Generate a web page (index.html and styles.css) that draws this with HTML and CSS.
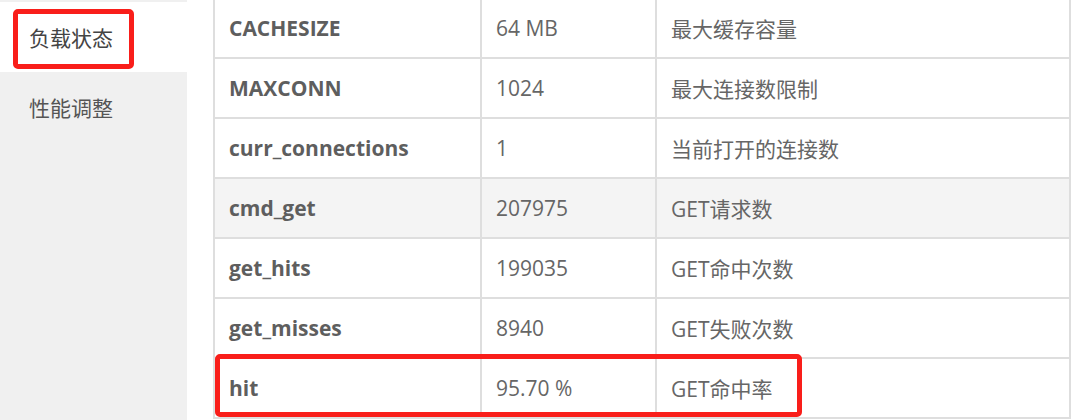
FILE: index.html
```html
<!DOCTYPE html>
<html lang="zh-CN">
<head>
<meta charset="utf-8">
<title>负载状态</title>
<link rel="stylesheet" href="styles.css">
</head>
<body>
<div class="page">
  <aside class="sidebar">
    <div class="nav-item active"><span class="mark"></span>负载状态</div>
    <div class="nav-item">性能调整</div>
  </aside>
  <main class="main">
    <table class="stats">
      <colgroup><col class="c1"><col class="c2"><col class="c3"></colgroup>
      <tbody>
        <tr><td class="key">CACHESIZE</td><td>64 MB</td><td>最大缓存容量</td></tr>
        <tr><td class="key">MAXCONN</td><td>1024</td><td>最大连接数限制</td></tr>
        <tr><td class="key">curr_connections</td><td>1</td><td>当前打开的连接数</td></tr>
        <tr class="hover"><td class="key">cmd_get</td><td>207975</td><td>GET请求数</td></tr>
        <tr><td class="key">get_hits</td><td>199035</td><td>GET命中次数</td></tr>
        <tr><td class="key">get_misses</td><td>8940</td><td>GET失败次数</td></tr>
        <tr><td class="key">hit</td><td>95.70 %</td><td>GET命中率</td></tr>
      </tbody>
    </table>
    <div class="mark mark-row"></div>
  </main>
</div>
</body>
</html>
```

FILE: styles.css
```css
html, body {
  margin: 0;
  padding: 0;
  background: #fff;
  height: 100%;
  overflow: hidden;
}
body {
  font-family: "Open Sans", "Noto Sans CJK SC", sans-serif;
  color: #5c5c5c;
}
.page {
  display: flex;
  height: 420px;
}
.sidebar {
  width: 187px;
  flex: none;
  background: #f0f0f0;
  padding-top: 2px;
  box-sizing: border-box;
}
.nav-item {
  position: relative;
  height: 70px;
  display: flex;
  align-items: center;
  padding-left: 29px;
  font-family: "Noto Sans CJK SC", sans-serif;
  font-size: 21px;
  color: #555;
}
.nav-item.active {
  background: #fff;
  color: #444;
}
.mark {
  position: absolute;
  border: 5px solid #f91e1a;
  border-radius: 5px;
  box-sizing: border-box;
}
.nav-item .mark {
  left: 13px;
  top: 7px;
  width: 121px;
  height: 60px;
}
.main {
  position: relative;
  padding-left: 26px;
  margin-top: -3px;
}
.stats {
  border-collapse: collapse;
  table-layout: fixed;
  width: 858px;
  border: 2px solid #dedede;
}
.c1 { width: 267px; }
.c2 { width: 175px; }
.c3 { width: 414px; }
.stats tr { height: 60px; }
.stats td {
  border: 2px solid #dedede;
  padding: 0 0 0 14px;
  font-size: 21px;
  color: #666;
  vertical-align: middle;
  white-space: nowrap;
}
.stats td.key {
  font-weight: 700;
  color: #5e5e5e;
}
.stats tr.hover td {
  background: #f4f4f4;
}
.mark-row {
  left: 28px;
  top: 357px;
  width: 587px;
  height: 63px;
}
```
